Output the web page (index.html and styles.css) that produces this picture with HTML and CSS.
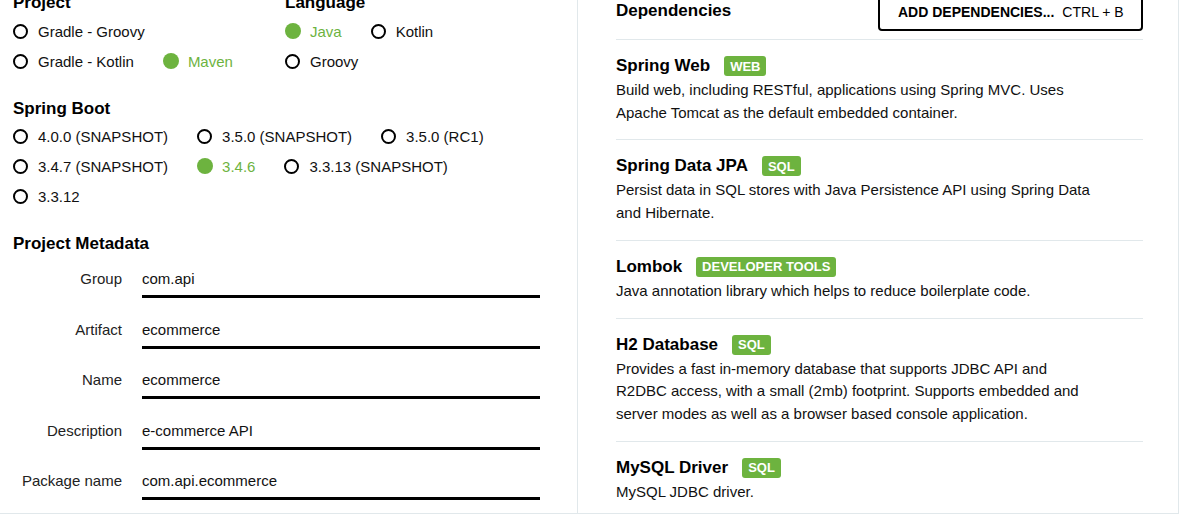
FILE: index.html
```html
<!DOCTYPE html>
<html lang="en">
<head>
<meta charset="utf-8">
<title>Spring Initializr</title>
<link rel="stylesheet" href="styles.css">
</head>
<body>
<div class="main">
  <div class="col-left">
    <div class="top-row">
      <section class="group group-project">
        <h2 class="heading heading-first">Project</h2>
        <div class="options options-project">
          <label class="radio"><span class="circle"></span>Gradle - Groovy</label>
          <label class="radio"><span class="circle"></span>Gradle - Kotlin</label>
          <label class="radio checked"><span class="circle"></span>Maven</label>
        </div>
      </section>
      <section class="group group-language">
        <h2 class="heading heading-first">Language</h2>
        <div class="options options-language">
          <label class="radio checked"><span class="circle"></span>Java</label>
          <label class="radio"><span class="circle"></span>Kotlin</label>
          <label class="radio"><span class="circle"></span>Groovy</label>
        </div>
      </section>
    </div>
    <section class="group group-boot">
      <h2 class="heading">Spring Boot</h2>
      <div class="options options-boot">
        <label class="radio"><span class="circle"></span>4.0.0 (SNAPSHOT)</label>
        <label class="radio"><span class="circle"></span>3.5.0 (SNAPSHOT)</label>
        <label class="radio"><span class="circle"></span>3.5.0 (RC1)</label>
        <label class="radio"><span class="circle"></span>3.4.7 (SNAPSHOT)</label>
        <label class="radio checked"><span class="circle"></span>3.4.6</label>
        <label class="radio"><span class="circle"></span>3.3.13 (SNAPSHOT)</label>
        <label class="radio"><span class="circle"></span>3.3.12</label>
      </div>
    </section>
    <section class="group group-meta">
      <h2 class="heading">Project Metadata</h2>
      <div class="fields">
        <div class="field"><span class="field-label">Group</span><span class="field-input">com.api</span></div>
        <div class="field"><span class="field-label">Artifact</span><span class="field-input">ecommerce</span></div>
        <div class="field"><span class="field-label">Name</span><span class="field-input">ecommerce</span></div>
        <div class="field"><span class="field-label">Description</span><span class="field-input">e-commerce API</span></div>
        <div class="field"><span class="field-label">Package name</span><span class="field-input">com.api.ecommerce</span></div>
      </div>
    </section>
  </div>
  <div class="col-right">
    <div class="deps-header">
      <h2 class="heading deps-heading">Dependencies</h2>
      <button class="add-btn"><span class="add-btn-main">ADD DEPENDENCIES...</span><span class="add-btn-key">CTRL + B</span></button>
    </div>
    <ul class="deps">
      <li class="dep">
        <div class="dep-title">Spring Web <span class="badge">WEB</span></div>
        <p class="dep-desc">Build web, including RESTful, applications using Spring MVC. Uses<br>Apache Tomcat as the default embedded container.</p>
      </li>
      <li class="dep">
        <div class="dep-title">Spring Data JPA <span class="badge">SQL</span></div>
        <p class="dep-desc">Persist data in SQL stores with Java Persistence API using Spring Data<br>and Hibernate.</p>
      </li>
      <li class="dep">
        <div class="dep-title">Lombok <span class="badge">DEVELOPER TOOLS</span></div>
        <p class="dep-desc">Java annotation library which helps to reduce boilerplate code.</p>
      </li>
      <li class="dep">
        <div class="dep-title">H2 Database <span class="badge">SQL</span></div>
        <p class="dep-desc">Provides a fast in-memory database that supports JDBC API and<br>R2DBC access, with a small (2mb) footprint. Supports embedded and<br>server modes as well as a browser based console application.</p>
      </li>
      <li class="dep">
        <div class="dep-title">MySQL Driver <span class="badge">SQL</span></div>
        <p class="dep-desc">MySQL JDBC driver.</p>
      </li>
    </ul>
  </div>
</div>
</body>
</html>
```

FILE: styles.css
```css
* { box-sizing: border-box; }

html, body {
  margin: 0;
  padding: 0;
  background: #fff;
}

body {
  font-family: "Liberation Sans", Arial, Helvetica, sans-serif;
  color: #000;
  overflow: hidden;
}

.main {
  display: grid;
  grid-template-columns: 578px 601px;
  width: 1179px;
  height: 514px;
  border-bottom: 1px solid #e1e8eb;
  overflow: hidden;
}

.col-left {
  border-right: 1px solid #e1e8eb;
  padding-left: 13px;
  overflow: hidden;
}

.col-right {
  border-right: 1px solid #e1e8eb;
  padding: 0 35px 0 38px;
  overflow: hidden;
}

.heading {
  margin: 0;
  font-size: 17px;
  line-height: 20px;
  font-weight: bold;
  color: #000;
}

.heading-first {
  margin-top: -7px;
}

.deps-heading {
  padding-top: 2px;
}

.top-row {
  display: flex;
}

.group-project {
  width: 272px;
}

.group-language {
  width: 220px;
}

.options {
  display: flex;
  flex-wrap: wrap;
  column-gap: 29px;
  margin-top: 3px;
}

.options-project { width: 250px; }
.options-language { width: 200px; }
.options-boot { width: 500px; margin-top: 2px; }

.radio {
  display: flex;
  align-items: center;
  height: 30px;
  font-size: 15px;
  color: #111;
  white-space: nowrap;
}

.circle {
  width: 15px;
  height: 15px;
  border: 2px solid #000;
  border-radius: 50%;
  margin-right: 10px;
  flex: none;
}

.radio.checked {
  color: #6db33f;
}

.radio.checked .circle {
  border: none;
  background: #6db33f;
  width: 16px;
  height: 16px;
  margin-right: 9px;
}

.group-boot {
  margin-top: 23px;
}

.group-meta {
  margin-top: 23px;
}

.fields {
  display: flex;
  flex-direction: column;
  row-gap: 21.5px;
  margin-top: 15px;
}

.field {
  display: grid;
  grid-template-columns: 109px 398px;
  column-gap: 20px;
  align-items: start;
}

.field-label {
  text-align: right;
  font-size: 15px;
  line-height: 20px;
  color: #222;
}

.field-input {
  font-size: 15px;
  line-height: 20px;
  color: #111;
  padding-bottom: 6px;
  border-bottom: 3px solid #000;
}

.deps-header {
  display: flex;
  justify-content: space-between;
  align-items: center;
  margin-top: -11px;
  padding-bottom: 8px;
}

.add-btn {
  display: flex;
  align-items: center;
  gap: 8px;
  height: 42px;
  width: 265px;
  padding: 4px 0 0 18px;
  background: #fff;
  border: 2px solid #000;
  border-radius: 4px;
  font-family: inherit;
  font-size: 14px;
  line-height: 16px;
  color: #000;
}

.add-btn-main {
  font-weight: bold;
}

.deps {
  list-style: none;
  margin: 0;
  padding: 0;
}

.dep {
  border-top: 1px solid #e1e8eb;
  padding: 16px 0 15px;
}

.dep-title {
  display: flex;
  align-items: center;
  height: 20px;
  font-size: 17px;
  font-weight: bold;
  color: #000;
}

.badge {
  display: inline-flex;
  align-items: center;
  height: 20px;
  margin-left: 14px;
  padding: 0 6px;
  background: #6db33f;
  color: #fff;
  font-size: 13px;
  font-weight: bold;
  border-radius: 3px;
}

.dep-desc {
  margin: 3px 0 0;
  font-size: 15px;
  line-height: 22.7px;
  color: #111;
}
```
